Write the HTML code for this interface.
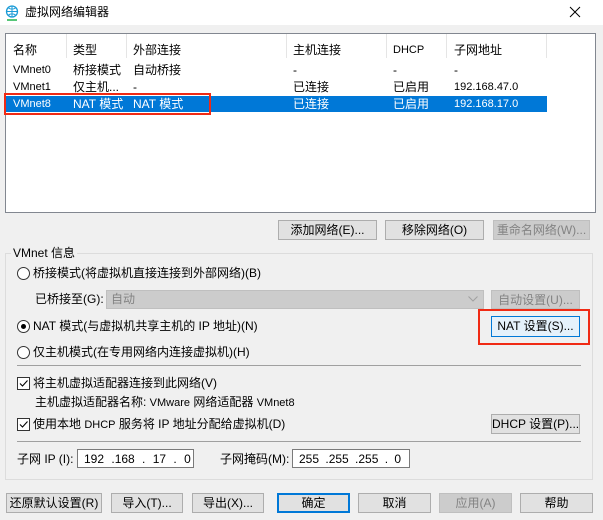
<!DOCTYPE html>
<html><head><meta charset="utf-8"><style>
*{margin:0;padding:0;box-sizing:border-box}
body{width:603px;height:520px;background:#f0f0f0;font-family:"Liberation Sans","Noto Sans CJK SC",sans-serif;font-size:12px;color:#000;position:relative;overflow:hidden}
.a{position:absolute;white-space:nowrap}
.btn{position:absolute;background:#e1e1e1;border:1px solid #adadad;text-align:center;font-size:12px;line-height:18px;white-space:nowrap;overflow:hidden}
.dis{background:#cccccc;border-color:#bfbfbf;color:#838383}
.t{position:absolute;white-space:nowrap;line-height:14px}
.radio{position:absolute;width:13px;height:13px;border:1px solid #333;border-radius:50%;background:#fff}
.chk{position:absolute;width:13px;height:13px;border:1px solid #333;background:#fff}
</style></head><body>
<div class="a" style="left:0;top:0;width:603px;height:25px;background:#fff"></div>
<svg class="a" style="left:5px;top:5px" width="14" height="16" viewBox="0 0 14 16"><circle cx="7" cy="6.5" r="5.5" fill="none" stroke="#1a9bd7" stroke-width="1.3"/><path d="M1.5 6.5h11M7 1v11M3.5 3c2 1.5 5 1.5 7 0M3.5 10c2-1.5 5-1.5 7 0" stroke="#1a9bd7" fill="none"/><path d="M2 15h10" stroke="#1fb34a" stroke-width="1.5"/></svg>
<div class="t" style="left:25px;top:5px;font-size:12px">虚拟网络编辑器</div>
<svg class="a" style="left:569px;top:6px" width="12" height="12"><path d="M1 1L11 11M11 1L1 11" stroke="#000" stroke-width="1"/></svg>

<div class="a" style="left:5px;top:33px;width:591px;height:180px;background:#fff;border:1px solid #828790"></div>
<div class="a" style="left:6px;top:34px;width:541px;height:24px;border-right:1px solid #e5e5e5"></div>
<div class="a" style="left:66px;top:34px;width:1px;height:24px;background:#e5e5e5"></div>
<div class="a" style="left:126px;top:34px;width:1px;height:24px;background:#e5e5e5"></div>
<div class="a" style="left:286px;top:34px;width:1px;height:24px;background:#e5e5e5"></div>
<div class="a" style="left:386px;top:34px;width:1px;height:24px;background:#e5e5e5"></div>
<div class="a" style="left:446px;top:34px;width:1px;height:24px;background:#e5e5e5"></div>
<div class="t" style="left:13px;top:43px">名称</div><div class="t" style="left:73px;top:43px">类型</div><div class="t" style="left:133px;top:43px">外部连接</div><div class="t" style="left:293px;top:43px">主机连接</div><div class="t" style="left:393px;top:43px;font-size:11px">DHCP</div><div class="t" style="left:454px;top:43px">子网地址</div>
<div class="t" style="left:13px;top:63px;font-size:11px">VMnet0</div><div class="t" style="left:73px;top:63px">桥接模式</div><div class="t" style="left:133px;top:63px">自动桥接</div><div class="t" style="left:293px;top:63px">-</div><div class="t" style="left:393px;top:63px">-</div><div class="t" style="left:454px;top:63px">-</div>
<div class="t" style="left:13px;top:80px;font-size:11px">VMnet1</div><div class="t" style="left:73px;top:80px">仅主机...</div><div class="t" style="left:133px;top:80px">-</div><div class="t" style="left:293px;top:80px">已连接</div><div class="t" style="left:393px;top:80px">已启用</div><div class="t" style="left:454px;top:80px;font-size:11px">192.168.47.0</div>
<div class="a" style="left:6px;top:96px;width:541px;height:16px;background:#0078d7"></div>
<div class="t" style="left:13px;top:97px;color:#fff;font-size:11px">VMnet8</div><div class="t" style="left:73px;top:97px;color:#fff">NAT 模式</div><div class="t" style="left:133px;top:97px;color:#fff">NAT 模式</div><div class="t" style="left:293px;top:97px;color:#fff">已连接</div><div class="t" style="left:393px;top:97px;color:#fff">已启用</div><div class="t" style="left:454px;top:97px;color:#fff;font-size:11px">192.168.17.0</div>
<div class="a" style="left:4px;top:93px;width:207px;height:22px;border:2px solid #f02a14"></div>

<div class="btn" style="left:278px;top:220px;width:99px;height:20px">添加网络(E)...</div>
<div class="btn" style="left:385px;top:220px;width:99px;height:20px">移除网络(O)</div>
<div class="btn dis" style="left:493px;top:220px;width:97px;height:20px">重命名网络(W)...</div>

<div class="a" style="left:5px;top:253px;width:588px;height:227px;border:1px solid #dcdcdc"></div>
<div class="t" style="left:11px;top:246px;background:#f0f0f0;padding:0 2px">VMnet 信息</div>

<div class="radio" style="left:17px;top:267px"></div><div class="t" style="left:33px;top:266px">桥接模式(将虚拟机直接连接到外部网络)(B)</div>
<div class="t" style="left:35px;top:292px">已桥接至(G):</div>
<div class="a" style="left:106px;top:290px;width:378px;height:19px;background:#cccccc;border:1px solid #bfbfbf"></div>
<div class="t" style="left:111px;top:292px;color:#838383">自动</div>
<svg class="a" style="left:468px;top:296px" width="10" height="6"><path d="M0.5 0.5L5 5L9.5 0.5" stroke="#a0a0a0" fill="none"/></svg>
<div class="btn dis" style="left:491px;top:290px;width:89px;height:19px">自动设置(U)...</div>

<div class="radio" style="left:17px;top:320px"></div><div class="a" style="left:21px;top:324px;width:5px;height:5px;border-radius:50%;background:#000"></div>
<div class="t" style="left:33px;top:319px">NAT 模式(与虚拟机共享主机的 IP 地址)(N)</div>
<div class="btn" style="left:491px;top:316px;width:89px;height:21px;background:#e5f1fb;border-color:#0078d7;line-height:19px">NAT 设置(S)...</div>
<div class="a" style="left:478px;top:309px;width:112px;height:36px;border:2px solid #f02a14"></div>

<div class="radio" style="left:17px;top:346px"></div><div class="t" style="left:33px;top:345px">仅主机模式(在专用网络内连接虚拟机)(H)</div>
<div class="a" style="left:17px;top:365px;width:564px;height:1px;background:#a0a0a0"></div>

<div class="chk" style="left:17px;top:377px"></div><svg class="a" style="left:18px;top:378px" width="11" height="11"><path d="M2 5.5L4.5 8L9.5 2.5" stroke="#000" fill="none" stroke-width="1.1"/></svg>
<div class="t" style="left:33px;top:376px">将主机虚拟适配器连接到此网络(V)</div>
<div class="t" style="left:35px;top:395px">主机虚拟适配器名称: <span style="font-size:11px">VMware</span> 网络适配器 <span style="font-size:11px">VMnet8</span></div>
<div class="chk" style="left:17px;top:418px"></div><svg class="a" style="left:18px;top:419px" width="11" height="11"><path d="M2 5.5L4.5 8L9.5 2.5" stroke="#000" fill="none" stroke-width="1.1"/></svg>
<div class="t" style="left:33px;top:417px">使用本地 <span style="font-size:11px">DHCP</span> 服务将 IP 地址分配给虚拟机(D)</div>
<div class="btn" style="left:491px;top:414px;width:89px;height:20px">DHCP 设置(P)...</div>
<div class="a" style="left:17px;top:441px;width:564px;height:1px;background:#a0a0a0"></div>

<div class="t" style="left:17px;top:452px">子网 IP (I):</div>
<div class="a" style="left:77px;top:449px;width:117px;height:19px;background:#fff;border:1px solid #7a7a7a"></div>
<div class="t" style="left:84px;top:452px;word-spacing:4px">192 .168 . 17 . 0</div>
<div class="t" style="left:220px;top:452px">子网掩码(M):</div>
<div class="a" style="left:292px;top:449px;width:118px;height:19px;background:#fff;border:1px solid #7a7a7a"></div>
<div class="t" style="left:299px;top:452px;word-spacing:3px">255 .255 .255 . 0</div>

<div class="btn" style="left:6px;top:493px;width:96px;height:20px">还原默认设置(R)</div>
<div class="btn" style="left:111px;top:493px;width:72px;height:20px">导入(T)...</div>
<div class="btn" style="left:192px;top:493px;width:72px;height:20px">导出(X)...</div>
<div class="btn" style="left:277px;top:493px;width:73px;height:20px;border:2px solid #0078d7;line-height:16px">确定</div>
<div class="btn" style="left:358px;top:493px;width:73px;height:20px">取消</div>
<div class="btn dis" style="left:439px;top:493px;width:73px;height:20px">应用(A)</div>
<div class="btn" style="left:520px;top:493px;width:73px;height:20px">帮助</div>
</body></html>
